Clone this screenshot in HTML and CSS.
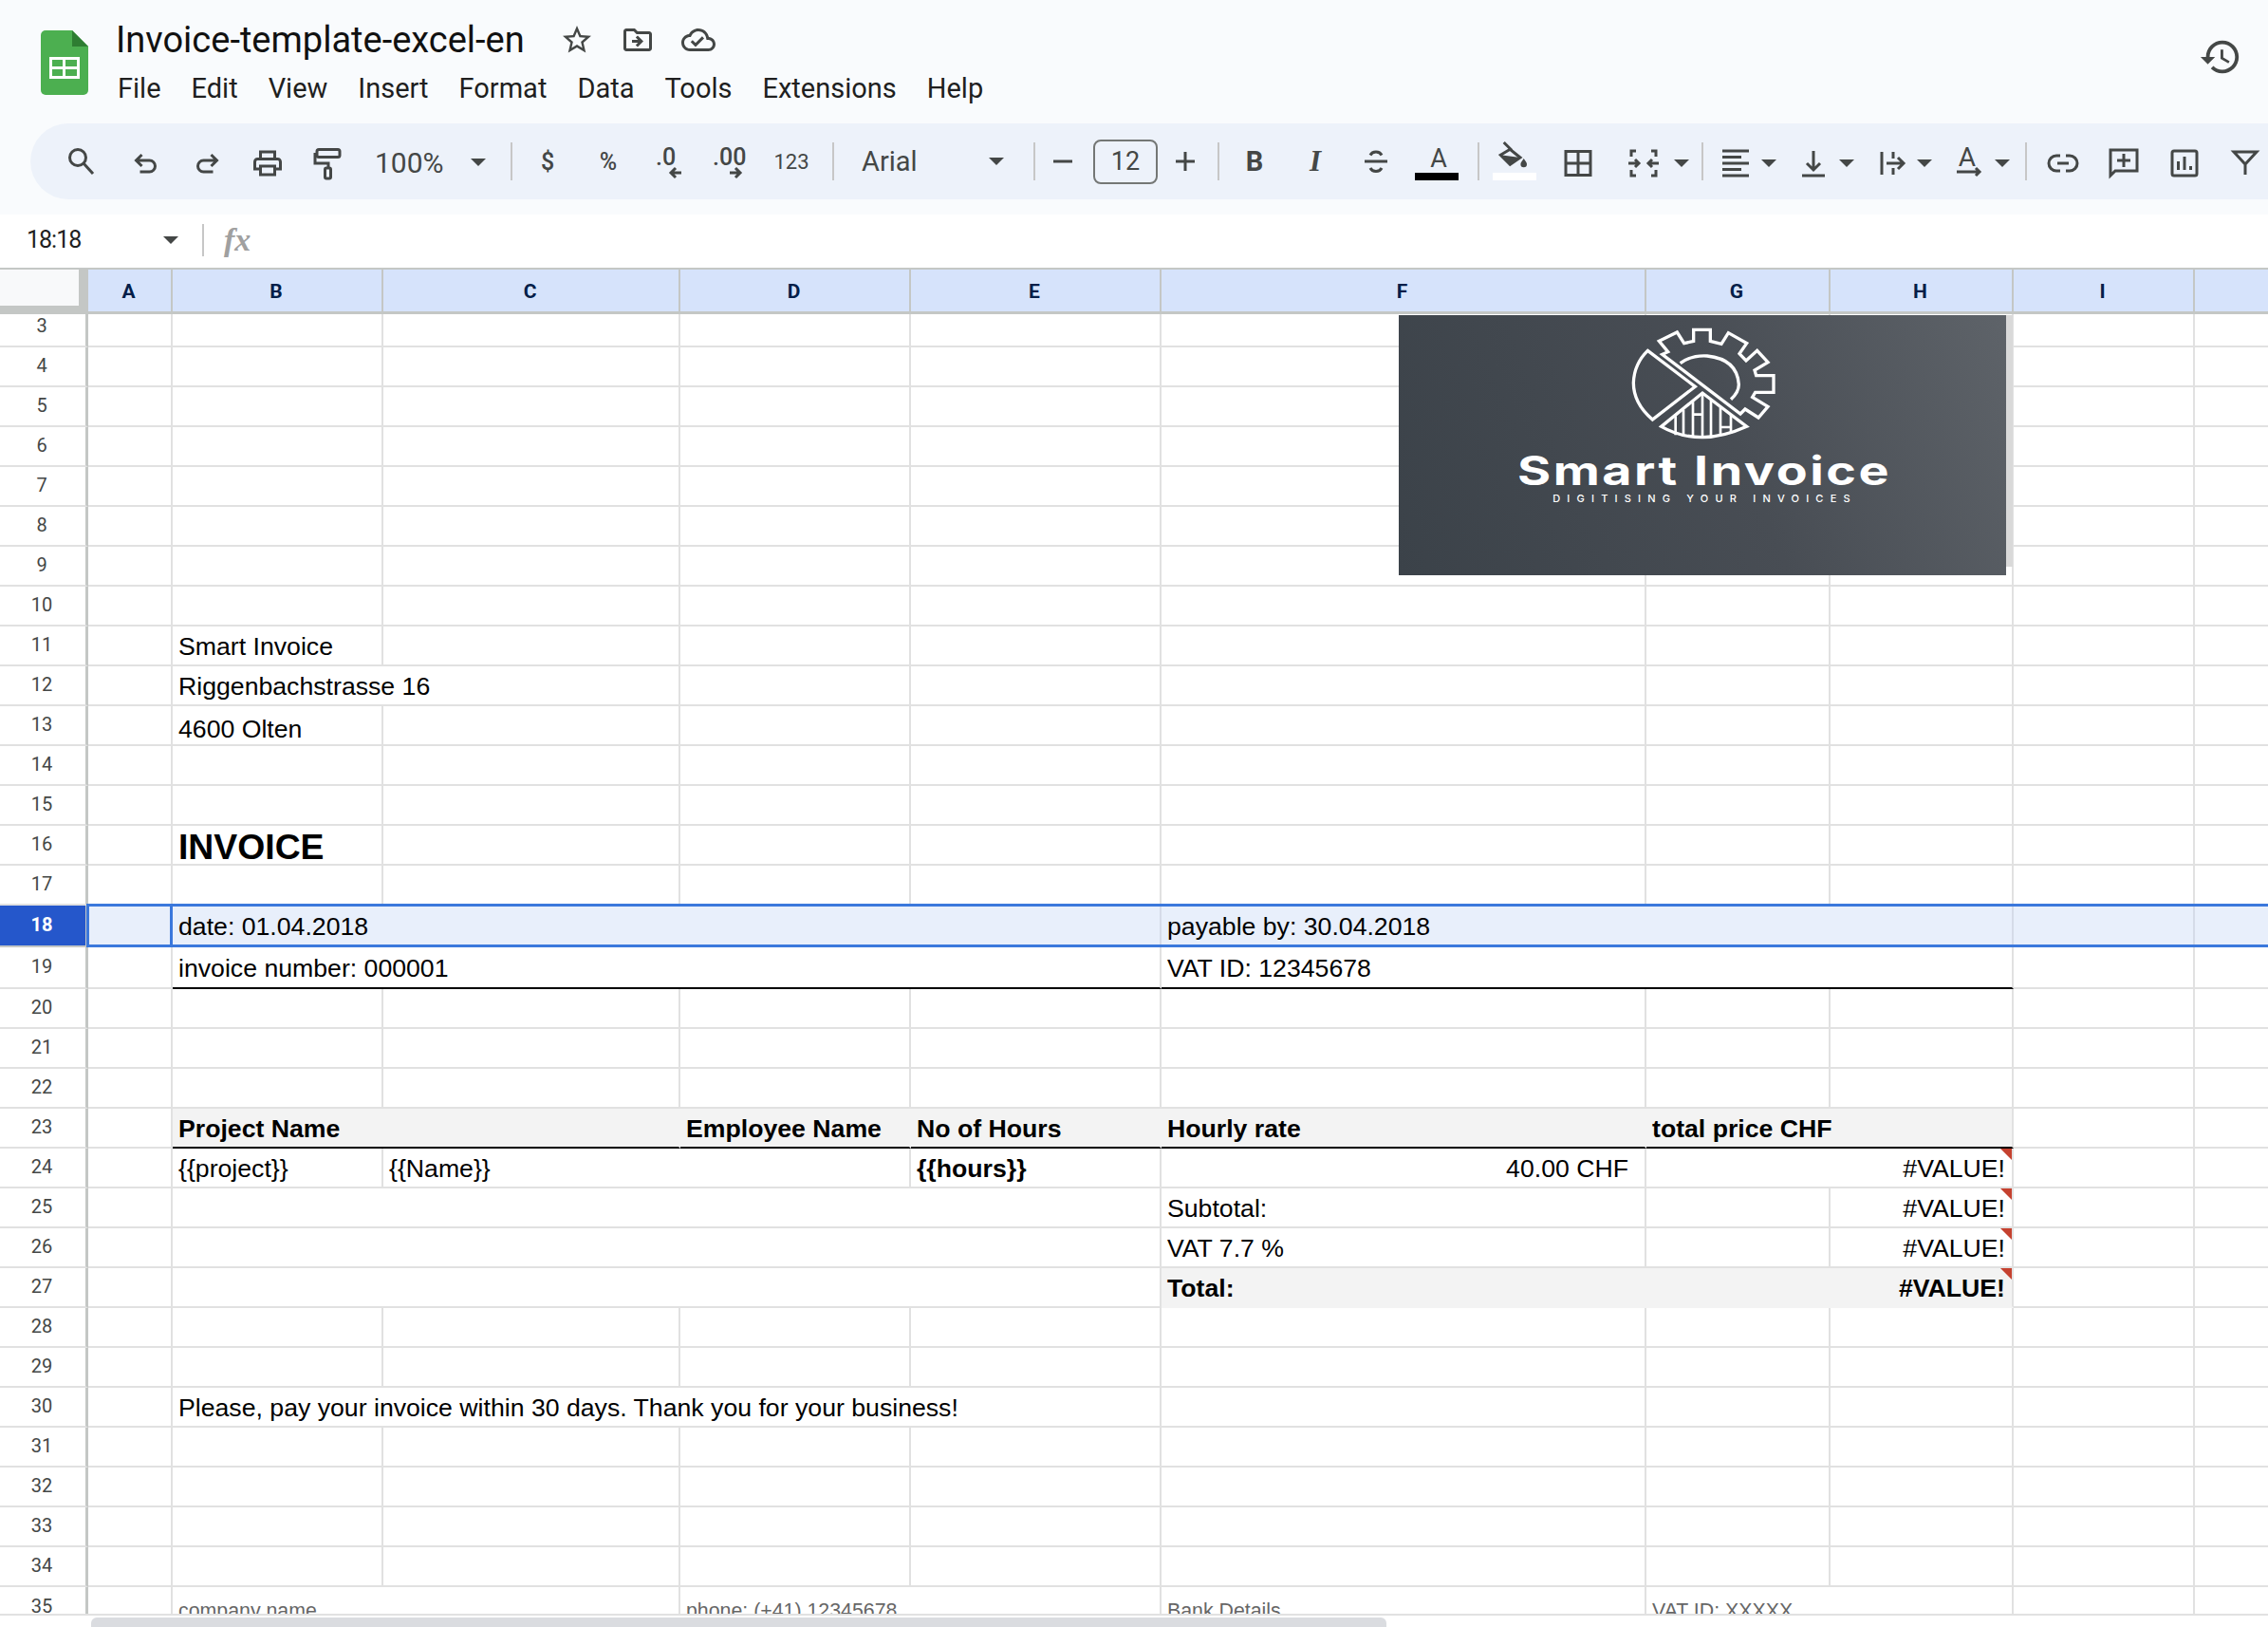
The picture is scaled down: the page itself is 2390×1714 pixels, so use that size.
FILE: index.html
```html
<!DOCTYPE html>
<html lang="en">
<head>
<meta charset="utf-8">
<title>Invoice-template-excel-en</title>
<link rel="stylesheet" href="styles.css">
</head>
<body>
<div class="app">
  <header class="top">
    <div class="titlebar">
      <svg class="applogo" viewBox="0 0 50 68"><path class="g1" d="M0 5a5 5 0 0 1 5-5h28l17 17v46a5 5 0 0 1-5 5H5a5 5 0 0 1-5-5z"/><path class="g2" d="M33 0v17h17z"/><path class="g3" d="M9 28h32v23H9zm3 3v7h11v-7zm14 0v7h12v-7zM12 41v7h11v-7zm14 0v7h12v-7z"/></svg>
      <div class="titlecol">
        <div class="titleline">
          <span class="doctitle">Invoice-template-excel-en</span>
          <svg class="ticon star" viewBox="0 0 24 24"><path d="M22 9.24l-7.19-.62L12 2 9.19 8.63 2 9.24l5.46 4.73L5.82 21 12 17.27 18.18 21l-1.63-7.03L22 9.24zM12 15.4l-3.76 2.27 1-4.28-3.32-2.88 4.38-.38L12 6.1l1.71 4.04 4.38.38-3.32 2.88 1 4.28L12 15.4z"/></svg>
          <svg class="ticon" viewBox="0 0 24 24"><path d="M20 6h-8l-2-2H4c-1.1 0-1.99.9-1.99 2L2 18c0 1.1.9 2 2 2h16c1.1 0 2-.9 2-2V8c0-1.1-.9-2-2-2zm0 12H4V6h5.17l2 2H20v10zm-8.01-9l-1.41 1.41L12.16 12H8v2h4.16l-1.59 1.59L11.99 17 16 13.01 11.99 9z"/></svg>
          <svg class="ticon" viewBox="0 0 24 24"><path d="M19.35 10.04C18.67 6.59 15.64 4 12 4 9.11 4 6.6 5.64 5.35 8.04 2.34 8.36 0 10.91 0 14c0 3.31 2.69 6 6 6h13c2.76 0 5-2.24 5-5 0-2.64-2.05-4.78-4.65-4.96zM19 18H6c-2.21 0-4-1.79-4-4 0-2.05 1.53-3.76 3.56-3.97l1.07-.11.5-.95C8.08 7.14 9.94 6 12 6c2.62 0 4.88 1.86 5.39 4.43l.3 1.5 1.53.11c1.56.1 2.78 1.41 2.78 2.96 0 1.65-1.35 3-3 3zm-9-3.82l-2.09-2.09L6.5 13.5 10 17l6.01-6.01-1.41-1.41z"/></svg>
        </div>
        <nav class="menu"><span>File</span><span>Edit</span><span>View</span><span>Insert</span><span>Format</span><span>Data</span><span>Tools</span><span>Extensions</span><span>Help</span></nav>
      </div>
      <svg class="history" viewBox="0 0 24 24"><path d="M13 3c-4.97 0-9 4.03-9 9H1l3.89 3.89.07.14L9 12H6c0-3.87 3.13-7 7-7s7 3.13 7 7-3.13 7-7 7c-1.93 0-3.68-.79-4.94-2.06l-1.42 1.42C8.27 19.99 10.51 21 13 21c4.97 0 9-4.03 9-9s-4.03-9-9-9zm-1 5v5l4.28 2.54.72-1.21-3.5-2.08V8H12z"/></svg>
    </div>
    <div class="toolbar">
      <span class="tb"><svg class="ic" viewBox="0 0 34 34"><circle cx="14" cy="13" r="8.5"/><path d="M20 19l10 11"/></svg></span>
      <span class="tb ml5"><svg class="ic" viewBox="0 0 34 34"><path d="M12.500 10l-6 6 6 6M6.500 16h14a6 6 0 0 1 0 12h-10"/></svg></span>
      <span class="tb"><svg class="ic" viewBox="0 0 34 34"><path d="M21.500 10l6 6-6 6M27.500 16h-14a6 6 0 0 0 0 12h10"/></svg></span>
      <span class="tb"><svg class="ic fill" viewBox="0 0 34 34"><path transform="translate(-1 1) scale(1.5)" d="M19 8h-1V3H6v5H5c-1.66 0-3 1.34-3 3v6h4v4h12v-4h4v-6c0-1.66-1.34-3-3-3zM8 5h8v3H8V5zm8 14H8v-4h8v4zm2-4v-2H6v2H4v-4c0-.55.45-1 1-1h14c.55 0 1 .45 1 1v4h-2z"/></svg></span>
      <span class="tb"><svg class="ic" viewBox="0 0 34 34"><rect x="5" y="4.500" width="24" height="8" rx="2"/><path d="M3 8v11h14v5"/><rect x="13.500" y="24" width="6" height="11" rx="1.500"/></svg></span>
      <span class="tb zoomsel"><span>100%</span><i class="caret"></i></span>
      <i class="sep"></i>
      <span class="tb ml5 txt">$</span>
      <span class="tb txt">%</span>
      <span class="tb"><svg class="ic" viewBox="0 0 34 34"><text class="svgt" x="3" y="21">.0</text><path d="M30 29H19M24 24l-5 5 5 5"/></svg></span>
      <span class="tb"><svg class="ic" viewBox="0 0 34 34"><text class="svgt" x="-1" y="21">.00</text><path d="M17 29h11M23 24l5 5-5 5"/></svg></span>
      <span class="tb txt small">123</span>
      <i class="sep ml12"></i>
      <span class="fontsel"><span>Arial</span><i class="caret"></i></span>
      <i class="sep"></i>
      <span class="tb step"><svg class="ic" viewBox="0 0 34 34"><path d="M7 17h20"/></svg></span>
      <span class="sizebox">12</span>
      <span class="tb step"><svg class="ic" viewBox="0 0 34 34"><path d="M7 17h20M17 7v20"/></svg></span>
      <i class="sep ml5"></i>
      <span class="tb ml5 bold">B</span>
      <span class="tb ital">I</span>
      <span class="tb"><svg class="ic" viewBox="0 0 34 34"><path d="M11 10.500a6.500 5.500 0 0 1 12 0M5 17h24M11 24a6.500 5.500 0 0 0 12 0"/></svg></span>
      <span class="tb"><svg class="big" viewBox="0 0 64 64"><text class="svga" x="34" y="38">A</text><rect class="bk" x="9" y="44" width="46" height="8"/></svg></span>
      <i class="sep ml11"></i>
      <span class="tb ml5"><svg class="big" viewBox="0 0 64 64"><path class="fillp" d="M20.700 12l8.300 8.300M17.300 25.300l10-6 10.700 8.700-10.700 7.300z"/><path class="solid" d="M17.300 25.300L38 28l-10.700 7.300zM41.700 29c2 3 3.300 4.500 3.300 6a3.300 3.300 0 0 1-6.600 0c0-1.500 1.300-3 3.300-6z"/><rect class="wh" x="9" y="44" width="46" height="8"/></svg></span>
      <span class="tb ml3"><svg class="ic" viewBox="0 0 34 34"><path d="M4 6.500h26v25H4zM17 6.500v25M4 19h26"/></svg></span>
      <span class="tb split merge"><svg class="ic" viewBox="0 0 34 34"><path d="M9 6H4v6M25 6h5v6M9 32H4v-6M25 32h5v-6M1 19h11M8 15l4 4-4 4M33 19H22M26 15l-4 4 4 4"/></svg><i class="caret"></i></span>
      <i class="sep"></i>
      <span class="tb split"><svg class="ic" viewBox="0 0 34 34"><path d="M3 6h28M3 12.500h20M3 19h28M3 25.500h20M3 32h28"/></svg><i class="caret"></i></span>
      <span class="tb split"><svg class="ic" viewBox="0 0 34 34"><path d="M17 6v20M10 19l7 7 7-7M5 32h24"/></svg><i class="caret"></i></span>
      <span class="tb split"><svg class="ic" viewBox="0 0 34 34"><path d="M7 7v24M19 7v7M19 24v7M12 19h18M24 13l6 6-6 6"/></svg><i class="caret"></i></span>
      <span class="tb split"><svg class="ic" viewBox="0 0 34 34"><text class="svgt2" x="15" y="22">A</text><path d="M4 28h24M24 24l4 4-4 4"/></svg><i class="caret"></i></span>
      <i class="sep ml11"></i>
      <span class="tb ml6"><svg class="ic" viewBox="0 0 34 34"><path d="M14 11h-4a8 8 0 0 0 0 16h4M20 11h4a8 8 0 0 1 0 16h-4M11 19h12"/></svg></span>
      <span class="tb"><svg class="ic" viewBox="0 0 34 34"><path d="M3 5h28v22H8l-5 5zM17 9v14M10 16h14"/></svg></span>
      <span class="tb"><svg class="ic" viewBox="0 0 34 34"><rect x="4" y="6" width="26" height="26" rx="2"/><path d="M10.500 17v9M17 12v14M23.500 22v4"/></svg></span>
      <span class="tb"><svg class="ic" viewBox="0 0 34 34"><path d="M5 7h24L17 20zM17 20v11"/></svg></span>
    </div>
  </header>
  <div class="formula">
    <span class="namebox">18:18</span><i class="caret"></i><i class="fsep"></i><span class="fx">fx</span>
  </div>
  <div class="sheet">
    <table class="grid">
      <colgroup><col class="c0"><col class="ca"><col class="cb"><col class="cc"><col class="cd"><col class="ce"><col class="cf"><col class="cg"><col class="ch"><col class="ci"><col class="cj"></colgroup>
      <thead><tr><th class="corner"></th><th>A</th><th>B</th><th>C</th><th>D</th><th>E</th><th>F</th><th>G</th><th>H</th><th>I</th><th></th></tr></thead>
      <tbody>
        <tr class="r3"><th>3</th><td></td><td></td><td></td><td></td><td></td><td></td><td></td><td></td><td></td><td></td></tr>
        <tr><th>4</th><td></td><td></td><td></td><td></td><td></td><td></td><td></td><td></td><td></td><td></td></tr>
        <tr><th>5</th><td></td><td></td><td></td><td></td><td></td><td></td><td></td><td></td><td></td><td></td></tr>
        <tr><th>6</th><td></td><td></td><td></td><td></td><td></td><td></td><td></td><td></td><td></td><td></td></tr>
        <tr><th>7</th><td></td><td></td><td></td><td></td><td></td><td></td><td></td><td></td><td></td><td></td></tr>
        <tr><th>8</th><td></td><td></td><td></td><td></td><td></td><td></td><td></td><td></td><td></td><td></td></tr>
        <tr><th>9</th><td></td><td></td><td></td><td></td><td></td><td></td><td></td><td></td><td></td><td></td></tr>
        <tr><th>10</th><td></td><td></td><td></td><td></td><td></td><td></td><td></td><td></td><td></td><td></td></tr>
        <tr><th>11</th><td></td><td>Smart Invoice</td><td></td><td></td><td></td><td></td><td></td><td></td><td></td><td></td></tr>
        <tr><th>12</th><td></td><td colspan="2">Riggenbachstrasse 16</td><td></td><td></td><td></td><td></td><td></td><td></td><td></td></tr>
        <tr><th>13</th><td></td><td class="low">4600 Olten</td><td></td><td></td><td></td><td></td><td></td><td></td><td></td><td></td></tr>
        <tr><th>14</th><td></td><td></td><td></td><td></td><td></td><td></td><td></td><td></td><td></td><td></td></tr>
        <tr><th>15</th><td></td><td></td><td></td><td></td><td></td><td></td><td></td><td></td><td></td><td></td></tr>
        <tr><th>16</th><td></td><td class="heading">INVOICE</td><td></td><td></td><td></td><td></td><td></td><td></td><td></td><td></td></tr>
        <tr><th>17</th><td></td><td></td><td></td><td></td><td></td><td></td><td></td><td></td><td></td><td></td></tr>
        <tr class="tall sel"><th>18</th><td></td><td colspan="4">date: 01.04.2018</td><td colspan="3">payable by: 30.04.2018</td><td></td><td></td></tr>
        <tr class="tall"><th>19</th><td></td><td colspan="4" class="under">invoice number: 000001</td><td colspan="3" class="under">VAT ID: 12345678</td><td></td><td></td></tr>
        <tr><th>20</th><td></td><td></td><td></td><td></td><td></td><td></td><td></td><td></td><td></td><td></td></tr>
        <tr><th>21</th><td></td><td></td><td></td><td></td><td></td><td></td><td></td><td></td><td></td><td></td></tr>
        <tr><th>22</th><td></td><td></td><td></td><td></td><td></td><td></td><td></td><td></td><td></td><td></td></tr>
        <tr><th>23</th><td></td><td colspan="2" class="shade under noline b">Project Name</td><td class="shade under noline b">Employee Name</td><td class="shade under noline b">No of Hours</td><td class="shade under noline b">Hourly rate</td><td colspan="2" class="shade under b">total price CHF</td><td></td><td></td></tr>
        <tr><th>24</th><td></td><td>{{project}}</td><td colspan="2">{{Name}}</td><td class="b">{{hours}}</td><td class="rt pad">40.00 CHF</td><td colspan="2" class="rt err">#VALUE!</td><td></td><td></td></tr>
        <tr><th>25</th><td></td><td colspan="4"></td><td>Subtotal:</td><td></td><td class="rt err">#VALUE!</td><td></td><td></td></tr>
        <tr><th>26</th><td></td><td colspan="4"></td><td>VAT 7.7 %</td><td></td><td class="rt err">#VALUE!</td><td></td><td></td></tr>
        <tr><th>27</th><td></td><td colspan="4"></td><td colspan="2" class="shade noline nobot b">Total:</td><td class="shade nobot rt err b">#VALUE!</td><td></td><td></td></tr>
        <tr><th>28</th><td></td><td></td><td></td><td></td><td></td><td></td><td></td><td></td><td></td><td></td></tr>
        <tr><th>29</th><td></td><td></td><td></td><td></td><td></td><td></td><td></td><td></td><td></td><td></td></tr>
        <tr><th>30</th><td></td><td colspan="4">Please, pay your invoice within 30 days. Thank you for your business!</td><td></td><td></td><td></td><td></td><td></td></tr>
        <tr><th>31</th><td></td><td></td><td></td><td></td><td></td><td></td><td></td><td></td><td></td><td></td></tr>
        <tr><th>32</th><td></td><td></td><td></td><td></td><td></td><td></td><td></td><td></td><td></td><td></td></tr>
        <tr><th>33</th><td></td><td></td><td></td><td></td><td></td><td></td><td></td><td></td><td></td><td></td></tr>
        <tr><th>34</th><td></td><td></td><td></td><td></td><td></td><td></td><td></td><td></td><td></td><td></td></tr>
        <tr class="r35"><th>35</th><td></td><td colspan="2" class="foot">company name</td><td colspan="2" class="foot">phone: (+41) 12345678</td><td class="foot">Bank Details</td><td colspan="2" class="foot">VAT ID: XXXXX</td><td></td><td></td></tr>
      </tbody>
    </table>
    <div class="selection"></div>
    <div class="active"></div>
    <div class="logo">
      <svg class="mark" viewBox="0 0 840 420">
        <path d="M232 118L382 232 247 336Q187 285 187 220 189 160 232 118Z"/>
        <path d="M296 122L268 88 325 60 347 95 377 88V52H430V88L465 97 487 62 545 95 522 128 543 150 578 118 612 155 570 180 575 197H630V250H572L563 265 612 295 582 330 540 303 525 318 278 130Z"/>
        <path d="M335 158Q370 132 420 135 515 145 520 225 520 250 495 272"/>
        <path d="M405 252L545 358Q470 392 405 392 335 392 275 358Z"/>
        <path class="thin" d="M320 325V385M345 305V390M375 280V392M405 252V392M432 275V392M462 298V388M495 322V380M375 320H405M462 360H495"/>
      </svg>
      <div class="brand">Smart Invoice</div>
      <div class="tag">DIGITISING YOUR INVOICES</div>
    </div>
  </div>
  <div class="scrollbar"><div class="thumb"></div></div>
</div>
</body>
</html>
```

FILE: styles.css
```css
* { box-sizing: border-box; }
html, body { margin: 0; padding: 0; height: 100%; overflow: hidden; background: #fff; }
body { font-family: Roboto, "Liberation Sans", sans-serif; }
.app { width: 2390px; height: 1714px; display: flex; flex-direction: column; overflow: hidden; }

/* top */
.top { height: 226px; background: #f9fbfd; display: flex; flex-direction: column; flex: none; }
.titlebar { height: 130px; display: flex; align-items: flex-start; padding: 28px 0 0 43px; }
.applogo { width: 50px; height: 68px; margin-top: 4px; flex: none; }
.g1 { fill: #4caf50; }
.g2 { fill: #2e7d32; }
.g3 { fill: #fff; fill-rule: evenodd; }
.titlecol { margin-left: 29px; flex: 1; }
.titleline { display: flex; align-items: center; height: 28px; }
.doctitle { font: 400 38px Roboto, sans-serif; color: #111; width: 468px; white-space: nowrap; }
.ticon { width: 36px; height: 36px; fill: #444746; flex: none; margin-right: 28px; }
.menu { display: flex; gap: 32px; margin-top: 20px; padding-left: 2px; font-size: 29px; color: #1f1f1f; line-height: 34px; }
.history { width: 46px; height: 46px; fill: #444746; margin: 9px 27px 0 0; flex: none; }

.toolbar { height: 80px; margin-left: 32px; width: 2400px; flex: none; background: #edf2fa; border-radius: 40px 0 0 40px; display: flex; align-items: center; padding-left: 21px; color: #444746; }
.tb { width: 64px; height: 64px; flex: none; display: flex; align-items: center; justify-content: center; font-size: 28px; }
.ic { width: 34px; height: 34px; overflow: visible; fill: none; stroke: #444746; stroke-width: 3; }
.ic.fill { fill: #444746; stroke: none; }
.big { width: 64px; height: 64px; overflow: visible; }
.ml3 { margin-left: 3px; }
.ml5 { margin-left: 5px; }
.ml6 { margin-left: 6px; }
.ml11 { margin-left: 11px; }
.ml12 { margin-left: 12px; }
.sep { width: 2px; height: 40px; background: #c7c7c7; flex: none; display: block; }
.caret { display: block; width: 0; height: 0; border-left: 8px solid transparent; border-right: 8px solid transparent; border-top: 8px solid #444746; flex: none; }
.zoomsel { width: 160px; justify-content: flex-start; padding: 2px 0 0 17px; font-size: 30px; }
.zoomsel .caret { margin-left: 28px; }
.txt { font-size: 25px; font-weight: 500; }
.small { font-size: 22px; font-weight: 400; padding-left: 2px; }
.fontsel { width: 210px; flex: none; display: flex; align-items: center; justify-content: space-between; padding: 0 31px 0 29px; font-size: 29px; }
.step { width: 58px; }
.sizebox { width: 68px; height: 47px; margin-left: 3px; flex: none; border: 2px solid #747775; border-radius: 8px; display: flex; align-items: center; justify-content: center; font-size: 27px; }
.bold { font: 700 29px Roboto, sans-serif; }
.ital { font: italic 700 31px "Liberation Serif", serif; }
.svgt { font: 500 25px Roboto, sans-serif; fill: #444746; stroke: none; }
.svgt2 { font: 400 28px Roboto, sans-serif; fill: #444746; stroke: none; text-anchor: middle; }
.svga { font: 400 27px Roboto, sans-serif; fill: #444746; text-anchor: middle; }
.bk { fill: #000; }
.wh { fill: #fff; }
.fillp { fill: none; stroke: #444746; stroke-width: 3; }
.solid { fill: #444746; }
.split { width: 82px; justify-content: flex-start; padding-left: 17px; }
.split .caret { margin-left: 10px; margin-top: 3px; }
.merge { width: 98px; padding-left: 20px; }
.merge .caret { margin-left: 15px; }

/* formula bar */
.formula { height: 56px; flex: none; display: flex; align-items: center; padding: 0 0 3px 28px; background: #fff; }
.namebox { width: 144px; font-size: 25px; letter-spacing: -1px; color: #1f1f1f; }
.fsep { display: block; width: 2px; height: 34px; background: #c7c7c7; margin-left: 25px; }
.fx { margin-left: 21px; font: italic 700 34px "Liberation Serif", serif; color: #a0a0a0; }

/* sheet */
.sheet { position: relative; height: 1418px; flex: none; overflow: hidden; }
.grid { table-layout: fixed; border-collapse: separate; border-spacing: 0; width: 2400px; font: 26.67px "Liberation Sans", Arial, sans-serif; color: #000; }
.c0 { width: 93px; } .ca { width: 89px; } .cb { width: 222px; } .cc { width: 313px; } .cd { width: 243px; }
.ce { width: 264px; } .cf { width: 511px; } .cg { width: 194px; } .ch { width: 193px; } .ci { width: 191px; } .cj { width: 87px; }
thead th { height: 49px; padding: 1px 2px 0 0; background: #d6e3fb; color: #041e49; font: 700 21px Roboto, sans-serif; border-top: 2px solid #c4c7c5; border-bottom: 3px solid #c4c7c5; border-right: 2px solid #c4c7c5; }
thead th.corner { background: #f8f9fa; border-right: 10px solid #c4c7c5; border-bottom: 9px solid #c4c7c5; }
tbody tr { height: 42px; }
tbody tr.r3 { height: 35px; }
tbody tr.tall { height: 44px; }
tbody tr.r35 { height: 44px; }
tbody th { padding: 0 2px 2px 0; background: #fff; font: 400 20px Roboto, sans-serif; color: #444746; line-height: 24px; border-right: 3px solid #c4c7c5; border-bottom: 2px solid #e1e1e1; }
tbody .r3 th { padding: 0 2px 0 0; vertical-align: top; }
td { padding: 1px 4px 0 6px; border-right: 2px solid #e1e1e1; border-bottom: 2px solid #e1e1e1; white-space: nowrap; line-height: 30px; position: relative; }
.sel th { background: #2557cb; color: #fff; font-weight: 700; border-bottom-color: #c4c7c5; }
.sel td { background: #e8effb; border-right-color: #d5dbe8; }
.low { padding-top: 8px; }
.heading { font-size: 37.33px; font-weight: 700; line-height: 36px; padding-top: 4px; }
.b { font-weight: 700; }
.rt { text-align: right; }
.pad { padding-right: 17px; }
.under { border-bottom-color: #000; }
.shade { background: #f3f3f3; }
.noline { border-right-color: #f3f3f3; }
.nobot { border-bottom-color: #f3f3f3; }
.err { padding-right: 7px; }
.err::after { content: ""; position: absolute; top: 0; right: 0; width: 0; height: 0; border-top: 12px solid #c5412f; border-left: 12px solid transparent; }
.foot { font-size: 21.33px; color: #666; vertical-align: top; padding-top: 13px; line-height: 24px; }

.selection { position: absolute; left: 91px; right: 0; top: 670px; height: 46px; border-top: 3px solid #3b78dc; border-bottom: 3px solid #3b78dc; pointer-events: none; }
.active { position: absolute; left: 91px; top: 670px; width: 91px; height: 46px; border: 3px solid #3b78dc; }

.logo { position: absolute; left: 1474px; top: 50px; width: 640px; height: 274px; background: linear-gradient(68deg, #3b4249 0%, #484d54 55%, #5e6369 100%); display: flex; flex-direction: column; align-items: center; color: #fff; }
.logo::after { content: ""; position: absolute; left: 100%; top: 0; width: 7px; height: 265px; background: #d9d9d9; }
.mark { width: 280px; height: 140px; margin-top: -2px; margin-left: 10px; flex: none; fill: none; stroke: #fff; stroke-width: 10; stroke-linejoin: miter; }
.thin { stroke-width: 8; }
.brand { font: 700 42px Inter, sans-serif; letter-spacing: 2px; line-height: 50px; margin: 1px 0 0 4px; white-space: nowrap; transform: scaleX(1.28); }
.tag { font: 500 11px Inter, sans-serif; letter-spacing: 7.2px; line-height: 12px; margin: -2px 0 0 5px; white-space: nowrap; }

/* scrollbar */
.scrollbar { flex: 1; border-top: 2px solid #e1e1e1; background: #fff; padding: 2px 0 0 96px; }
.thumb { width: 1365px; height: 11px; background: #dadce0; border-radius: 6px 6px 0 0; }
```
